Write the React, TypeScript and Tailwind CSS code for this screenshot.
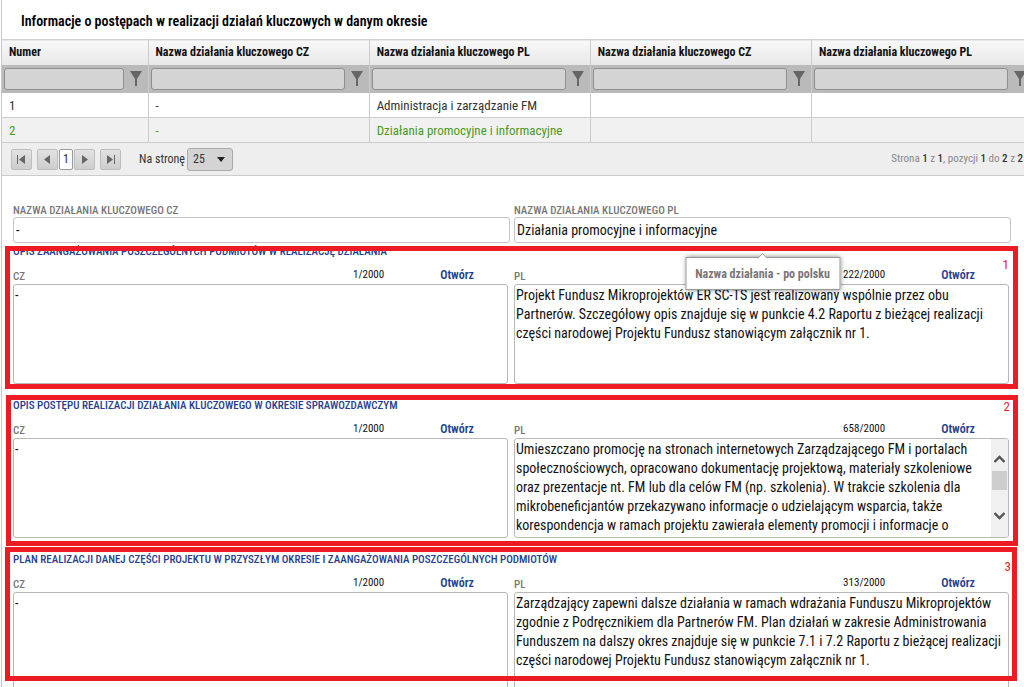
import { useState } from 'react';

const columns = [
  'Numer',
  'Nazwa działania kluczowego CZ',
  'Nazwa działania kluczowego PL',
  'Nazwa działania kluczowego CZ',
  'Nazwa działania kluczowego PL',
];

const rows = [
  ['1', '-', 'Administracja i zarządzanie FM', '', ''],
  ['2', '-', 'Działania promocyjne i informacyjne', '', ''],
];

const sections = [
  {
    id: 1,
    title: 'Opis zaangażowania poszczególnych podmiotów w realizację działania',
    count: '222/2000',
    scroll: false,
    frame: 'left-[3px] right-1.5 top-0 h-[143px]',
    mark: 'top-2.5 right-[15px]',
    text: `Projekt Fundusz Mikroprojektów ER SC-TS jest realizowany wspólnie przez obu
Partnerów. Szczegółowy opis znajduje się w punkcie 4.2 Raportu z bieżącej realizacji
części narodowej Projektu Fundusz stanowiącym załącznik nr 1.`,
  },
  {
    id: 2,
    title: 'Opis postępu realizacji działania kluczowego w okresie sprawozdawczym',
    count: '658/2000',
    scroll: true,
    frame: 'left-1 right-1.5 -top-[5px] h-[151px]',
    mark: '-top-0.5 right-3.5',
    text: `Umieszczano promocję na stronach internetowych Zarządzającego FM i portalach
społecznościowych, opracowano dokumentację projektową, materiały szkoleniowe
oraz prezentacje nt. FM lub dla celów FM (np. szkolenia). W trakcie szkolenia dla
mikrobeneficjantów przekazywano informacje o udzielającym wsparcia, także
korespondencja w ramach projektu zawierała elementy promocji i informacje o
udzielającym wsparcia oraz linki do stron działań projektowych`,
  },
  {
    id: 3,
    title: 'Plan realizacji danej części projektu w przyszłym okresie i zaangażowania poszczególnych podmiotów',
    count: '313/2000',
    scroll: false,
    frame: 'left-[3px] right-[7px] -top-[7px] h-[134px]',
    mark: 'top-1 right-[13px]',
    text: `Zarządzający zapewni dalsze działania w ramach wdrażania Funduszu Mikroprojektów
zgodnie z Podręcznikiem dla Partnerów FM. Plan działań w zakresie Administrowania
Funduszem na dalszy okres znajduje się w punkcie 7.1 i 7.2 Raportu z bieżącej realizacji
części narodowej Projektu Fundusz stanowiącym załącznik nr 1.`,
  },
];

function FilterIcon() {
  return (
    <svg width="12" height="15" viewBox="0 0 12 15" fill="#666">
      <path d="M0 0h12L7 8v7H5V8z" />
    </svg>
  );
}

function PagerButton({ label, path }: { label: string; path: string }) {
  return (
    <button
      aria-label={label}
      className="flex h-[21px] w-[21px] items-center justify-center rounded-xs border border-[#bdbdbd] bg-linear-to-b from-[#e2e2e2] to-[#cdcdcd]"
    >
      <svg width="11" height="11" viewBox="0 0 11 11" fill="#666">
        <path d={path} />
      </svg>
    </button>
  );
}

function Scrollbar() {
  return (
    <div className="flex w-[17px] shrink-0 flex-col items-center bg-[#f0f0f0] pt-4">
      <svg width="11" height="8" viewBox="0 0 11 8" fill="none" stroke="#555" strokeWidth="2.4">
        <path d="M.5 7 5.5 2 10.5 7" />
      </svg>
      <div className="mt-2 h-[19px] w-[15px] bg-[#cdcdcd]" />
      <svg className="mt-[22px]" width="11" height="8" viewBox="0 0 11 8" fill="none" stroke="#555" strokeWidth="2.4">
        <path d="M.5 1 5.5 6 10.5 1" />
      </svg>
    </div>
  );
}

type AreaProps = { id: string; lang: string; count: string; text: string; scroll?: boolean };

function Area({ id, lang, count, text, scroll }: AreaProps) {
  return (
    <div className="pr-0.5">
      <div className="flex h-[26px] items-center pt-2 pr-[34px] text-[12px] leading-4">
        <label htmlFor={id} className="mr-auto pt-1 text-[11px] font-medium text-[#777]">
          {lang}
        </label>
        <span className="text-[11px] text-[#111]">{count}</span>
        <a href="#" className="ml-14 font-semibold text-[#25408f]">
          Otwórz
        </a>
      </div>
      <div className="flex h-[100px] overflow-hidden rounded-[3px] border border-[#b8b8b8] bg-white">
        <textarea
          id={id}
          defaultValue={text}
          wrap="off"
          className="block min-w-0 flex-1 resize-none overflow-hidden px-px pt-px text-[14px] leading-[19px] whitespace-pre text-[#111] outline-none"
        />
        {scroll && <Scrollbar />}
      </div>
    </div>
  );
}

export default function App() {
  const [pageSize, setPageSize] = useState('25');

  return (
    <div className="h-screen overflow-hidden bg-white font-['Roboto_Condensed','Liberation_Sans_Narrow',Roboto,sans-serif] text-[#333]">
      <div className="ml-px border-l border-[#c9c9d6]">
        <h1 className="flex h-[39px] items-center pt-1 pl-[19px] text-[14px] font-semibold text-black">
          Informacje o postępach w realizacji działań kluczowych w danym okresie
        </h1>

        <div className="overflow-hidden">
          <table className="w-[calc(100%+9px)] table-fixed border-collapse text-left">
            <colgroup>
              <col className="w-[146px]" />
              <col />
              <col />
              <col />
              <col />
            </colgroup>
            <thead>
              <tr className="h-[25px] border-t border-[#d0d0d0] bg-linear-to-b from-[#f8f8f8] to-[#e8e8e8]">
                {columns.map((name, i) => (
                  <th key={i} className="border-r border-[#ccc] pl-[7px] text-[12px] leading-4 whitespace-nowrap text-[#111]">
                    {name}
                  </th>
                ))}
              </tr>
              <tr className="h-7 bg-[#bababa]">
                {columns.map((name, i) => (
                  <td key={i} className="border-r border-[#ccc] p-0">
                    <div className="flex items-center gap-1.5 pr-[6px] pl-0.5">
                      <input
                        aria-label={`Filtr: ${name}`}
                        className="h-[22px] min-w-0 flex-1 rounded-[3px] border border-[#8f8f8f] bg-[#d4d4d4] px-1 text-[14px]"
                      />
                      <FilterIcon />
                    </div>
                  </td>
                ))}
              </tr>
            </thead>
            <tbody>
              {rows.map((row, r) => (
                <tr
                  key={row[0]}
                  className={r === 1 ? 'h-[25px] bg-[#f1f1f1] text-[#4a9a1c]' : 'h-[25px] bg-white text-[#333]'}
                >
                  {row.map((cell, i) => (
                    <td key={i} className="border-r border-b border-[#ccc] p-0 pt-0.5 pl-[7px] text-[13px] leading-5 whitespace-nowrap">
                      {cell}
                    </td>
                  ))}
                </tr>
              ))}
            </tbody>
          </table>
        </div>

        <div className="flex h-[33px] items-center border-b border-[#ccc] bg-[#eee] pl-[9px] text-[12px]">
          <PagerButton label="Pierwsza strona" path="M1 1h1v9H1zM9 1v9L3 5.5z" />
          <div className="ml-[5px] flex items-center gap-px">
            <PagerButton label="Poprzednia strona" path="M8 1v9L2 5.5z" />
            <span className="flex h-[21px] w-3.5 items-center justify-center rounded-xs border border-[#999] bg-white">1</span>
            <PagerButton label="Następna strona" path="M3 1v9l6-4.5z" />
          </div>
          <div className="ml-[5px]">
            <PagerButton label="Ostatnia strona" path="M9 1h1v9H9zM2 1v9l6-4.5z" />
          </div>
          <label htmlFor="page-size" className="ml-[18px]">
            Na stronę
          </label>
          <div className="relative ml-0.5">
            <select
              id="page-size"
              value={pageSize}
              onChange={(e) => setPageSize(e.target.value)}
              className="block h-[23px] w-[46px] appearance-none rounded-[3px] border border-[#aaa] bg-[#d4d4d4] pl-[5px]"
            >
              <option>10</option>
              <option>25</option>
              <option>50</option>
            </select>
            <svg className="pointer-events-none absolute top-[9px] right-2" width="8" height="5" viewBox="0 0 8 5" fill="#222">
              <path d="M0 0h8L4 5z" />
            </svg>
          </div>
          <p className="ml-auto pr-px text-[11px] whitespace-nowrap text-[#888]">
            Strona <b className="font-medium text-[#333]">1</b> z <b className="font-medium text-[#333]">1</b>, pozycji{' '}
            <b className="font-medium text-[#333]">1</b> do <b className="font-medium text-[#333]">2</b> z{' '}
            <b className="font-medium text-[#333]">2</b>
          </p>
        </div>

        <div className="grid grid-cols-2 gap-1 pt-[27px] pr-[13px] pl-[11px]">
          <div>
            <label htmlFor="name-cz" className="block h-3.5 text-[11px] leading-4 font-medium text-[#777] uppercase">
              Nazwa działania kluczowego CZ
            </label>
            <input
              id="name-cz"
              defaultValue="-"
              className="block h-[26px] w-full rounded-[3px] border border-[#c4c4c4] px-0.5 text-[14px] text-[#111]"
            />
          </div>
          <div className="relative">
            <label htmlFor="name-pl" className="block h-3.5 text-[11px] leading-4 font-medium text-[#777] uppercase">
              Nazwa działania kluczowego PL
            </label>
            <input
              id="name-pl"
              defaultValue="Działania promocyjne i informacyjne"
              className="block h-[26px] w-full rounded-[3px] border border-[#c4c4c4] px-0.5 text-[14px] text-[#111]"
            />
            <div
              role="tooltip"
              className="absolute top-full left-1/2 z-20 mt-3.5 flex h-[33px] w-[155px] -translate-x-1/2 items-center justify-center border border-[#999] bg-white text-[12px] font-bold whitespace-nowrap text-[#777] shadow-[0_0_5px_rgba(0,0,0,0.5)]"
            >
              <svg className="absolute -top-[5px]" width="10" height="6" viewBox="0 0 10 6" fill="#fff" stroke="#999">
                <path d="M0 5.5 5 .7l5 4.8" />
              </svg>
              Nazwa działania - po polsku
            </div>
          </div>
        </div>

        <div className="pt-[3px]">
          {sections.map((s) => (
            <section key={s.id} className="relative h-[154px] pr-[13px] pl-[11px]">
              <h2 className="h-3 text-[11px] leading-[11px] font-medium whitespace-nowrap text-[#25408f] uppercase">{s.title}</h2>
              <div className="grid grid-cols-2 gap-1">
                <Area id={`cz-${s.id}`} lang="CZ" count="1/2000" text="-" />
                <Area id={`pl-${s.id}`} lang="PL" count={s.count} text={s.text} scroll={s.scroll} />
              </div>
              <div className={`pointer-events-none absolute z-10 border-[5px] border-[#ed1c24] ${s.frame}`} />
              <span className={`absolute z-10 text-[13px] leading-[18px] text-[#ed1c24] ${s.mark}`}>{s.id}</span>
            </section>
          ))}
        </div>
      </div>
    </div>
  );
}
